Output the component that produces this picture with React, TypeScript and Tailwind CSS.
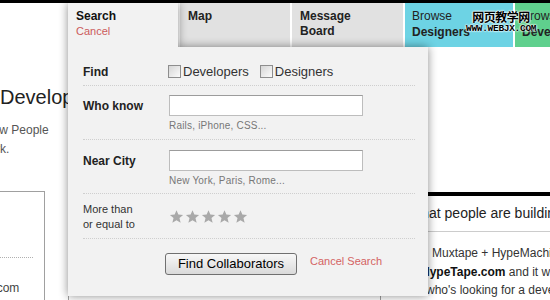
import { memo } from "react";

const Star = () => (
  <svg viewBox="0 0 24 24" className="h-[15px] w-[15px]" fill="#a9a9a9">
    <path d="M12 1.8l2.95 7.05 7.6.55-5.8 4.95 1.85 7.45L12 17.8l-6.6 4 1.85-7.45L1.45 9.4l7.6-.55z" />
  </svg>
);

const Check = () => (
  <span className="h-[13px] w-[13px] shrink-0 border border-[#8e8e8e] bg-linear-to-br from-[#d6d6d6] to-[#fbfbfb]" />
);

const TextField = ({ hint }: { hint: string }) => (
  <div>
    <div className="h-[21px] w-[194px] border border-[#bdbdbd] border-t-[#9c9c9c] bg-white" />
    <p className="mt-[3px] text-[10px] leading-[13px] tracking-[0.2px] text-[#777]">{hint}</p>
  </div>
);

const tabs = [
  { top: "Map", bottom: "", bg: "bg-[#e1e1e1]" },
  { top: "Message", bottom: "Board", bg: "bg-[#e1e1e1]" },
];

const SearchPanel = () => (
  <div className="absolute left-0 top-full h-[249px] w-[360px] bg-[#f2f2f2] pl-[15px] pr-[13px] pt-[11px] text-[#333]">
    {/* Find */}
    <div className="flex h-[28px] items-center border-b border-dotted border-[#cfcfcf]">
      <span className="w-[86px] text-[12px] font-bold text-[#222]">Find</span>
      <label className="-ml-[1px] flex items-center gap-[1px] text-[13px]">
        <Check />
        <span className="ml-[1px]">Developers</span>
      </label>
      <label className="ml-[11px] flex items-center gap-[1px] text-[13px]">
        <Check />
        <span className="ml-[1px]">Designers</span>
      </label>
    </div>

    {/* Who know */}
    <div className="flex border-b border-dotted border-[#cfcfcf] pb-[7px] pt-[9px]">
      <span className="flex h-[21px] w-[86px] items-center text-[12px] font-bold text-[#222]">Who know</span>
      <TextField hint="Rails, iPhone, CSS..." />
    </div>

    {/* Near City */}
    <div className="flex border-b border-dotted border-[#cfcfcf] pb-[6px] pt-[10px]">
      <span className="flex h-[21px] w-[86px] items-center text-[12px] font-bold text-[#222]">Near City</span>
      <TextField hint="New York, Paris, Rome..." />
    </div>

    {/* Rating */}
    <div className="flex h-[45px] items-center border-b border-dotted border-[#cfcfcf]">
      <span className="w-[86px] pt-[2px] text-[11px] leading-[15px]">
        More than
        <br />
        or equal to
      </span>
      <div className="flex gap-[1px]">
        <Star />
        <Star />
        <Star />
        <Star />
        <Star />
      </div>
    </div>

    {/* Actions */}
    <div className="flex items-start pl-[82px] pt-[14px]">
      <button className="h-[22px] w-[132px] rounded-[3px] border border-[#707070] bg-linear-to-b from-[#f8f8f8] to-[#dadada] text-[13px] leading-[20px] text-black">
        Find Collaborators
      </button>
      <span className="ml-[13px] mt-[1px] text-[11px] leading-[14px] text-[#d46363]">Cancel Search</span>
    </div>
  </div>
);

const App = () => {
  return (
    <div className="relative h-[300px] w-[550px] overflow-hidden bg-white font-['Liberation_Sans',Arial,sans-serif]">
      <div className="h-[3px] bg-black" />

      {/* Top navigation */}
      <nav className="relative z-10 flex h-[44px] gap-[2px] pl-[68px]">
        <div className="relative z-20 w-[110px] shrink-0 bg-[#f2f2f2] pl-[8px] pt-[6px] drop-shadow-[0_0_5px_rgba(0,0,0,0.45)]">
          <p className="text-[12px] font-bold leading-[15px] text-[#111]">Search</p>
          <p className="text-[11px] leading-[15px] text-[#cc5b5b]">Cancel</p>
          <SearchPanel />
        </div>
        {tabs.map((tab, i) => (
          <div
            key={tab.top}
            className={`${i === 1 ? "w-[111px]" : "w-[110px]"} shrink-0 ${tab.bg} pl-[8px] pt-[6px] text-[12px] font-bold leading-[15px] text-[#222]`}
          >
            <p>{tab.top}</p>
            {tab.bottom && <p>{tab.bottom}</p>}
          </div>
        ))}
        <div className="w-[108px] shrink-0 bg-[#6dd3e4] pl-[7px] pt-[6px] text-[#222]">
          <p className="text-[12px] leading-[15px]">Browse</p>
          <p className="text-[12px] font-bold leading-[16px]">Designers</p>
        </div>
        <div className="w-[110px] shrink-0 bg-[#5fd08d] pl-[7px] pt-[6px] text-[#222]">
          <p className="text-[12px] leading-[15px]">Browse</p>
          <p className="text-[12px] font-bold leading-[16px]">Developers</p>
        </div>

        {/* watermark */}
        <div className="absolute left-[466px] top-[6px] flex flex-col items-center [text-shadow:0_0_2px_#fff,0_0_2px_#fff,0_0_2px_#fff]">
          <span className="font-['Noto_Sans_CJK_SC',sans-serif] text-[12px] font-bold leading-[15px] tracking-[-0.5px] text-black">网页教学网</span>
          <span className="font-['Liberation_Mono',monospace] text-[9.5px] font-bold leading-[9px] tracking-[-0.3px] text-black">WWW.WEBJX.COM</span>
        </div>
      </nav>

      {/* Page content behind the dropdown */}
      <div className="flex">
        <div className="w-[68px] shrink-0 overflow-hidden pt-[40px] text-[#222]">
          <h2 className="whitespace-nowrap text-[20px] leading-[20px]">Developers</h2>
          <p className="-ml-[14px] mt-[14px] whitespace-nowrap text-[12px] leading-[19px] text-[#555]">new People</p>
          <p className="-ml-[36px] whitespace-nowrap text-[12px] leading-[19px] text-[#555]">network.</p>
          <div className="-ml-[21px] mt-[32px] h-[120px] w-[66px] border-r border-t border-[#a0a0a0] pl-[21px] pt-[65px]">
            <div className="w-[33px] border-t border-dotted border-[#b0b0b0]" />
            <p className="-ml-[30px] mt-[21px] whitespace-nowrap text-[12px] text-[#444]">tape.com</p>
          </div>
        </div>

        <div className="w-[360px] shrink-0 pt-[150px]">
          <div className="h-[120px] w-[313px] border-x border-[#a0a0a0]" />
        </div>

        <div className="w-[122px] shrink-0 overflow-hidden pt-[145px] text-[#333]">
          <div className="h-[4px] bg-black" />
          <h3 className="-ml-[20px] mt-[8px] whitespace-nowrap text-[14px] leading-[18px] text-[#222]">What people are building</h3>
          <div className="mt-[9px] border-t border-[#cccccc] pt-[12px] text-[12px] leading-[18.5px]">
            <p className="ml-[4px] whitespace-nowrap">Muxtape + HypeMachine</p>
            <p className="-ml-[7px] whitespace-nowrap">
              <b className="text-[#111]">HypeTape.com</b> and it was
            </p>
            <p className="-ml-[2px] whitespace-nowrap">who's looking for a developer</p>
            <p className="ml-[6px] whitespace-nowrap">Awesome</p>
          </div>
        </div>
      </div>
    </div>
  );
};

export default memo(App);
